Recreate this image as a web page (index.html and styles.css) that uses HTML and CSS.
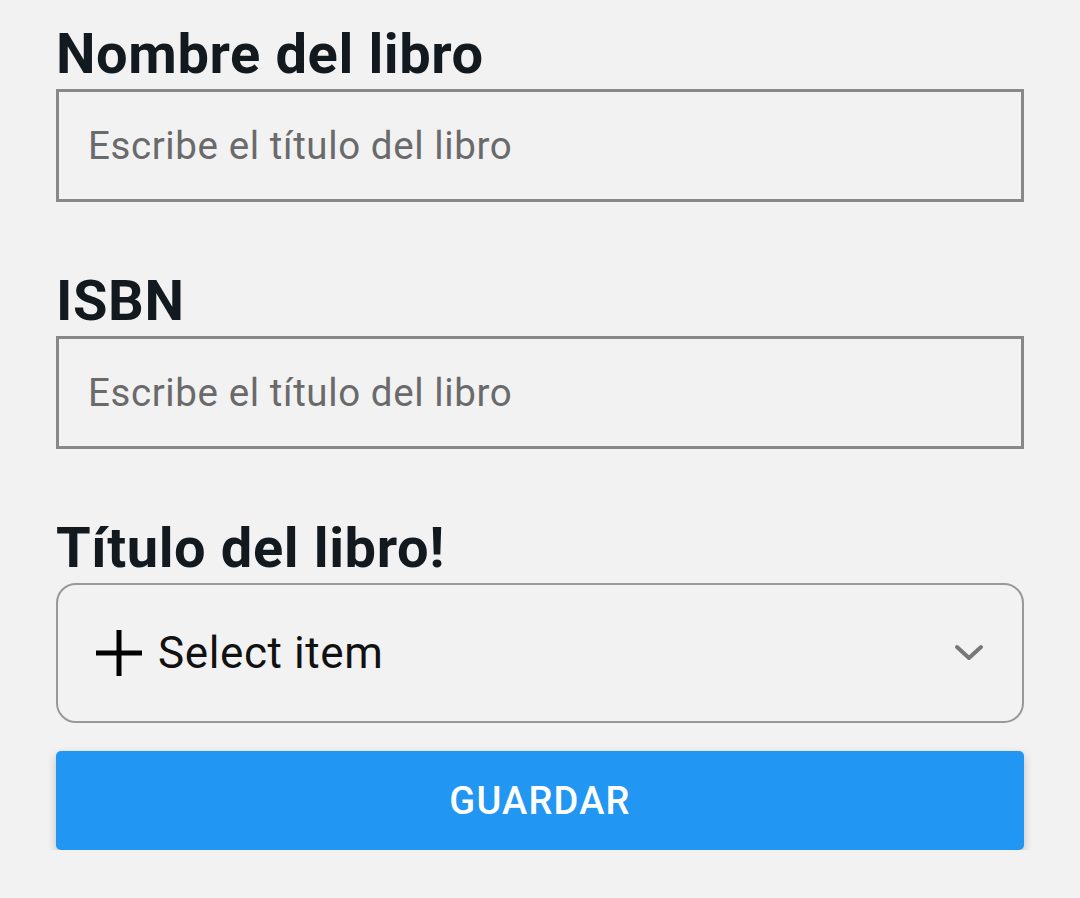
FILE: index.html
```html
<!DOCTYPE html>
<html lang="es">
<head>
<meta charset="utf-8">
<link rel="stylesheet" href="styles.css">
</head>
<body>
<form class="form">
  <label class="label">Nombre del libro</label>
  <div class="input"><span class="placeholder">Escribe el título del libro</span></div>

  <label class="label label-gap">ISBN</label>
  <div class="input"><span class="placeholder">Escribe el título del libro</span></div>

  <label class="label label-gap">Título del libro!</label>
  <div class="select">
    <svg class="plus" viewBox="0 0 46 46" width="46" height="46"><path d="M23 0v46M0 23h46" stroke="#000" stroke-width="5" fill="none"/></svg>
    <span class="select-text">Select item</span>
    <svg class="chevron" viewBox="0 0 30 18" width="30" height="18"><path d="M3 3l12 11 12-11" stroke="#777" stroke-width="4" fill="none" stroke-linecap="round" stroke-linejoin="round"/></svg>
  </div>

  <button type="button" class="button">GUARDAR</button>
</form>
</body>
</html>
```
FILE: styles.css
```css
html, body {
  margin: 0;
  padding: 0;
  background: #f2f2f2;
}
body {
  font-family: Roboto, "Liberation Sans", sans-serif;
}
.form {
  display: flex;
  flex-direction: column;
  padding: 22px 56px 0 56px;
}
.label {
  font-size: 56px;
  font-weight: 700;
  line-height: 64px;
  letter-spacing: 0.6px;
  color: #131a1f;
  margin-bottom: 3px;
}
.label-gap {
  margin-top: 67px;
}
.input {
  height: 107px;
  border: 3px solid #888;
  display: flex;
  align-items: center;
  padding-left: 29px;
}
.placeholder {
  font-size: 38.5px;
  letter-spacing: 0.6px;
  color: #6a6a6a;
}
.select {
  height: 136px;
  border: 2px solid #999;
  border-radius: 20px;
  display: flex;
  align-items: center;
  padding: 0 38px 0 38px;
}
.plus {
  flex: none;
}
.select-text {
  font-size: 44px;
  letter-spacing: 0.6px;
  color: #111;
  margin-left: 16px;
  flex: 1;
}
.chevron {
  flex: none;
}
.button {
  margin-top: 28px;
  height: 99px;
  border: none;
  border-radius: 5px;
  background: #2196f3;
  color: #fff;
  font-family: Roboto, "Liberation Sans", sans-serif;
  font-weight: 500;
  font-size: 38px;
  letter-spacing: 1.2px;
  box-shadow: 0 4px 10px rgba(0, 0, 0, 0.22);
}
```
